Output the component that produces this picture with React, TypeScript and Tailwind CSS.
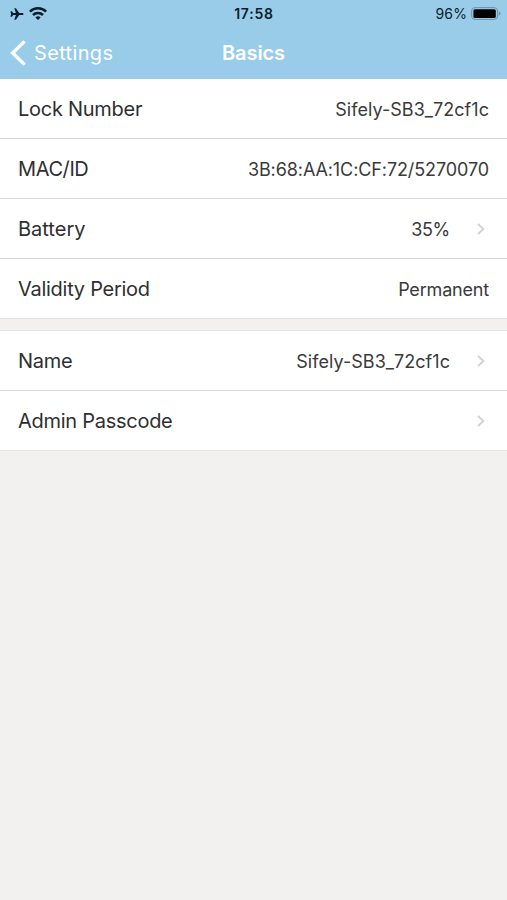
import React from 'react';

interface RowProps {
  label: string;
  value?: string;
  labelClass?: string;
  valueClass?: string;
  chevron?: boolean;
}

const ChevronIcon: React.FC = () => (
  <svg className="w-2 h-3" viewBox="0 0 8 12" fill="none" stroke="#d0d0d2" strokeWidth="1.8">
    <path d="M1 0.8 6.4 6 1 11.2" />
  </svg>
);

const Row: React.FC<RowProps> = ({
  label,
  value,
  labelClass = 'tracking-[-0.27px]',
  valueClass = 'tracking-[0.04px]',
  chevron,
}) => (
  <div className="flex items-center h-[60px] pt-px pl-[18px] border-b border-[#d6d6d6] last:border-[#e6e5e5]">
    <span className={`grow text-[20px] leading-6 text-[#2f2f2f] ${labelClass}`}>{label}</span>
    <span className={`pt-px text-[18px] leading-6 text-[#3a3a3a] ${chevron ? 'mr-[27px]' : 'mr-[18px]'} ${valueClass}`}>
      {value}
    </span>
    {chevron && (
      <div className="mr-[22px]">
        <ChevronIcon />
      </div>
    )}
  </div>
);

const StatusBar: React.FC = () => (
  <div className="grid grid-cols-3 items-center h-[27px] text-[#0b1e2c]">
    <div className="flex items-center gap-[5px] pl-[10px]">
      <svg className="w-[14px] h-3" viewBox="0 0 14 12" fill="currentColor">
        <path d="M13.6 6c0-.7-.8-1.1-1.7-1.1H9.2L5.9.2H4.3L5.9 4.9H3.2L1.9 3.3H.5L1.1 6 .5 8.7h1.4l1.3-1.6h2.7l-1.6 4.7h1.6l3.3-4.7h2.7c.9 0 1.7-.4 1.7-1.1Z" />
      </svg>
      <svg className="w-[18px] h-[13px]" viewBox="0 0 18 13" fill="none" stroke="currentColor" strokeWidth="2.5">
        <path d="M.9 4.7a11.5 11.5 0 0 1 16.2 0" />
        <path d="M4 8a7.2 7.2 0 0 1 10 0" />
        <path d="M9 13 6.4 10.4a3.8 3.8 0 0 1 5.2 0Z" fill="currentColor" stroke="none" />
      </svg>
    </div>
    <span className="text-center text-[14px] leading-4 font-semibold tracking-[0.8px] pl-px">17:58</span>
    <div className="flex items-center justify-end gap-1 pr-[6px]">
      <span className="text-[14px] leading-4 tracking-[0.1px]">96%</span>
      <svg className="w-[30px] h-[14px]" viewBox="0 0 30 14">
        <rect x="0.6" y="0.6" width="26" height="11.8" rx="3.4" fill="none" stroke="#6f93a8" />
        <rect x="2.4" y="2.2" width="22.4" height="8.8" rx="1.6" fill="#000" />
        <path d="M27.8 4.2c1.1.5 1.7 1.3 1.7 2.3s-.6 1.8-1.7 2.3Z" fill="#6f93a8" />
      </svg>
    </div>
  </div>
);

const NavBar: React.FC = () => (
  <div className="grid grid-cols-3 items-center h-[52px] text-white">
    <div className="flex items-center gap-2 pl-[10px]">
      <svg className="w-4 h-[26px]" viewBox="0 0 16 26" fill="none" stroke="currentColor" strokeWidth="3.4">
        <path d="M14.6 1.4 2.6 13l12 11.6" />
      </svg>
      <span className="text-[20px] leading-6 tracking-[0.35px]">Settings</span>
    </div>
    <span className="text-center text-[20px] leading-6 font-semibold tracking-[-0.1px]">Basics</span>
  </div>
);

export default function App() {
  return (
    <div className="min-h-screen bg-[#f2f1f0] font-[Inter,sans-serif]">
      <header className="h-[79px] bg-[#98cce8]">
        <StatusBar />
        <NavBar />
      </header>
      <section className="bg-white">
        <Row label="Lock Number" value="Sifely-SB3_72cf1c" />
        <Row
          label="MAC/ID"
          value="3B:68:AA:1C:CF:72/5270070"
          labelClass="tracking-[-0.4px]"
          valueClass="tracking-[-0.1px]"
        />
        <Row label="Battery" value="35%" labelClass="tracking-normal" valueClass="tracking-[-0.3px]" chevron />
        <Row label="Validity Period" value="Permanent" valueClass="tracking-[-0.18px]" />
      </section>
      <section className="mt-[11px] bg-white border-t border-[#e2e1e1]">
        <Row label="Name" value="Sifely-SB3_72cf1c" chevron />
        <Row label="Admin Passcode" chevron />
      </section>
    </div>
  );
}
